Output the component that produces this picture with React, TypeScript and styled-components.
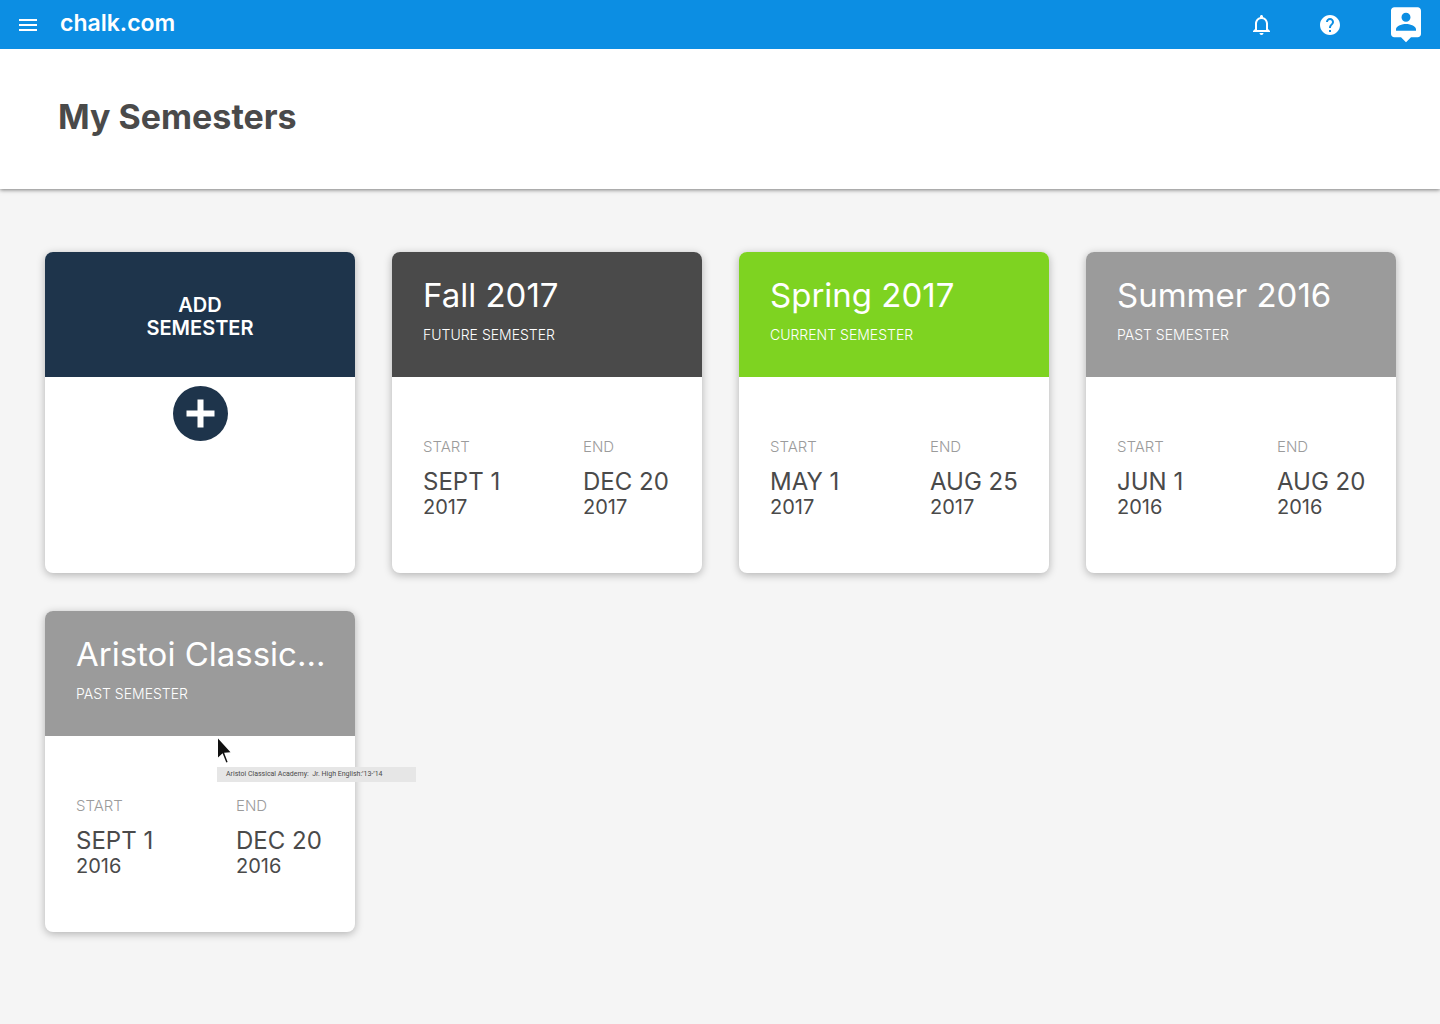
import React from "react";
import styled, { createGlobalStyle } from "styled-components";

const GlobalStyle = createGlobalStyle`
  * {
    box-sizing: border-box;
  }
  body {
    margin: 0;
    background: #f5f5f5;
    color: #4a4a4a;
    font-family: Inter, "Liberation Sans", sans-serif;
  }
  button {
    padding: 0;
    border: 0;
    background: none;
    color: inherit;
    font: inherit;
    cursor: pointer;
  }
  h1, h2, p, dl, dd {
    margin: 0;
  }
`;

const TopBar = styled.header`
  position: relative;
  z-index: 1;
  display: flex;
  align-items: center;
  height: 49px;
  padding: 0 14px 0 16px;
  background: #0c8ee3;
  color: #ffffff;
`;

const IconButton = styled.button`
  display: flex;
  width: 24px;
  height: 24px;

  svg {
    width: 100%;
    height: 100%;
    fill: currentColor;
  }
`;

const AccountButton = styled(IconButton)`
  width: 40px;
  height: 40px;
  margin-bottom: 2px;
`;

const Brand = styled.a`
  margin-left: 20px;
  padding-bottom: 3px;
  color: inherit;
  font-size: 23px;
  font-weight: 600;
  line-height: 28px;
  text-decoration: none;
`;

const Actions = styled.div`
  display: flex;
  align-items: center;
  gap: 44px;
  margin-left: auto;
`;

const PageHeader = styled.div`
  padding: 46px 58px 50px;
  background: #ffffff;
  box-shadow: 0 1px 4px rgba(0, 0, 0, 0.5);
`;

const PageTitle = styled.h1`
  font-size: 34px;
  font-weight: 700;
  line-height: 44px;
`;

const Grid = styled.main`
  display: grid;
  grid-template-columns: repeat(auto-fill, minmax(300px, 1fr));
  gap: 38px 37px;
  padding: 63px 44px 63px 45px;
`;

const Card = styled.article`
  position: relative;
  display: flex;
  flex-direction: column;
  min-height: 321px;
  border-radius: 8px;
  background: #ffffff;
  box-shadow: 0 2px 8px rgba(0, 0, 0, 0.28);
`;

const CardHead = styled.div<{ $color: string }>`
  height: 125px;
  padding: 20px 0 0 31px;
  border-radius: 8px 8px 0 0;
  background: ${(p) => p.$color};
  color: #ffffff;
`;

const SemesterName = styled.h2`
  font-size: 33px;
  font-weight: 400;
  line-height: 46px;
  white-space: nowrap;
`;

const Status = styled.p`
  padding-top: 8px;
  font-size: 14px;
  font-weight: 300;
  line-height: 18px;
  text-transform: uppercase;
`;

const Dates = styled.dl`
  display: grid;
  grid-template-columns: 160px 1fr;
  padding: 60px 0 54px 31px;
`;

const DateLabel = styled.dt`
  margin-bottom: 10px;
  color: #9b9b9b;
  font-size: 15px;
  font-weight: 300;
  line-height: 20px;
`;

const Day = styled.dd`
  font-size: 24px;
  line-height: 30px;
  white-space: nowrap;
`;

const Year = styled.dd`
  font-size: 20px;
  line-height: 20px;
`;

const AddCard = styled(Card).attrs({ as: "button", type: "button" })`
  align-items: stretch;
`;

const AddHead = styled(CardHead)`
  display: flex;
  flex-direction: column;
  align-items: center;
  padding: 42px 0 0;
  font-size: 20px;
  font-weight: 600;
  line-height: 23px;
`;

const PlusIcon = styled.svg`
  width: 55px;
  height: 55px;
  margin: 9px auto 0;
`;

const Cursor = styled.svg`
  position: absolute;
  top: 126px;
  left: 172px;
  width: 15px;
  height: 28px;
`;

const Tooltip = styled.div`
  position: absolute;
  top: 156px;
  left: 172px;
  z-index: 1;
  width: 199px;
  padding-left: 9px;
  background: #e6e6e6;
  font-family: Roboto, "Liberation Sans", sans-serif;
  font-size: 7px;
  line-height: 15px;
  white-space: pre;
`;

type Semester = {
  name: string;
  status: string;
  color: string;
  start: [string, string];
  end: [string, string];
  hint?: string;
};

const semesters: Semester[] = [
  { name: "Fall 2017", status: "Future Semester", color: "#4a4a4a", start: ["SEPT 1", "2017"], end: ["DEC 20", "2017"] },
  { name: "Spring 2017", status: "Current Semester", color: "#7ed321", start: ["MAY 1", "2017"], end: ["AUG 25", "2017"] },
  { name: "Summer 2016", status: "Past Semester", color: "#9b9b9b", start: ["JUN 1", "2016"], end: ["AUG 20", "2016"] },
  {
    name: "Aristoi Classic...",
    status: "Past Semester",
    color: "#9b9b9b",
    start: ["SEPT 1", "2016"],
    end: ["DEC 20", "2016"],
    hint: "Aristoi Classical Academy:  Jr. High English:’13-’14",
  },
];

function DateBlock({ label, value }: { label: string; value: [string, string] }) {
  return (
    <div>
      <DateLabel>{label}</DateLabel>
      <Day>{value[0]}</Day>
      <Year>{value[1]}</Year>
    </div>
  );
}

function SemesterCard({ semester }: { semester: Semester }) {
  return (
    <Card>
      <CardHead $color={semester.color}>
        <SemesterName>{semester.name}</SemesterName>
        <Status>{semester.status}</Status>
      </CardHead>
      <Dates>
        <DateBlock label="START" value={semester.start} />
        <DateBlock label="END" value={semester.end} />
      </Dates>
      {semester.hint && (
        <>
          <Cursor viewBox="0 0 15 28" aria-hidden="true">
            <path d="M1 1.5v19l4.6-4.2 3.7 9.2 1.3-.5-3.5-9.2 6.400-.5z" fill="#111" />
          </Cursor>
          <Tooltip role="tooltip">{semester.hint}</Tooltip>
        </>
      )}
    </Card>
  );
}

export default function App() {
  return (
    <>
      <GlobalStyle />
      <TopBar>
        <IconButton aria-label="Menu">
          <svg viewBox="0 0 24 24"><path d="M3 18h18v-2H3v2zm0-5h18v-2H3v2zm0-7v2h18V6H3z" /></svg>
        </IconButton>
        <Brand href="#">chalk.com</Brand>
        <Actions>
          <IconButton aria-label="Notifications">
            <svg viewBox="0 0 24 24"><path d="M11.5 22c1.1 0 2-.9 2-2h-4c0 1.1.9 2 2 2zm6.5-6v-5.5c0-3.07-2.13-5.64-5-6.32V3.5c0-.83-.67-1.5-1.5-1.5S10 2.67 10 3.5v.68c-2.87.68-5 3.25-5 6.32V16l-2 2v1h17v-1l-2-2zm-2 1H7v-6.5C7 8.01 9.01 6 11.5 6S16 8.01 16 10.5V17z" /></svg>
          </IconButton>
          <IconButton aria-label="Help">
            <svg viewBox="0 0 24 24"><path d="M12 2C6.48 2 2 6.48 2 12s4.48 10 10 10 10-4.48 10-10S17.52 2 12 2zm1 17h-2v-2h2v2zm2.07-7.75l-.9.92C13.45 12.9 13 13.5 13 15h-2v-.5c0-1.1.45-2.1 1.17-2.83l1.24-1.26c.37-.36.59-.86.59-1.41 0-1.1-.9-2-2-2s-2 .9-2 2H8c0-2.21 1.79-4 4-4s4 1.79 4 4c0 .88-.36 1.68-.93 2.25z" /></svg>
          </IconButton>
          <AccountButton aria-label="Account">
            <svg viewBox="0 0 24 24"><path d="M19 2H5c-1.11 0-2 .9-2 2v14c0 1.1.89 2 2 2h4l3 3 3-3h4c1.1 0 2-.9 2-2V4c0-1.1-.9-2-2-2zm-7 3.3c1.49 0 2.7 1.21 2.7 2.7 0 1.49-1.21 2.7-2.7 2.7-1.49 0-2.7-1.21-2.7-2.7 0-1.49 1.21-2.7 2.7-2.7zM18 16H6v-.9c0-2 4-3.1 6-3.1s6 1.1 6 3.1v.9z" /></svg>
          </AccountButton>
        </Actions>
      </TopBar>
      <PageHeader>
        <PageTitle>My Semesters</PageTitle>
      </PageHeader>
      <Grid>
        <AddCard>
          <AddHead $color="#1e344b">
            <span>ADD</span>
            <span>SEMESTER</span>
          </AddHead>
          <PlusIcon viewBox="0 0 55 55" aria-hidden="true">
            <circle cx="27.5" cy="27.5" r="27.5" fill="#1e344b" />
            <path d="M24.5 13.5h6v11h11v6h-11v11h-6v-11h-11v-6h11z" fill="#fff" />
          </PlusIcon>
        </AddCard>
        {semesters.map((semester) => (
          <SemesterCard key={semester.name} semester={semester} />
        ))}
      </Grid>
    </>
  );
}
